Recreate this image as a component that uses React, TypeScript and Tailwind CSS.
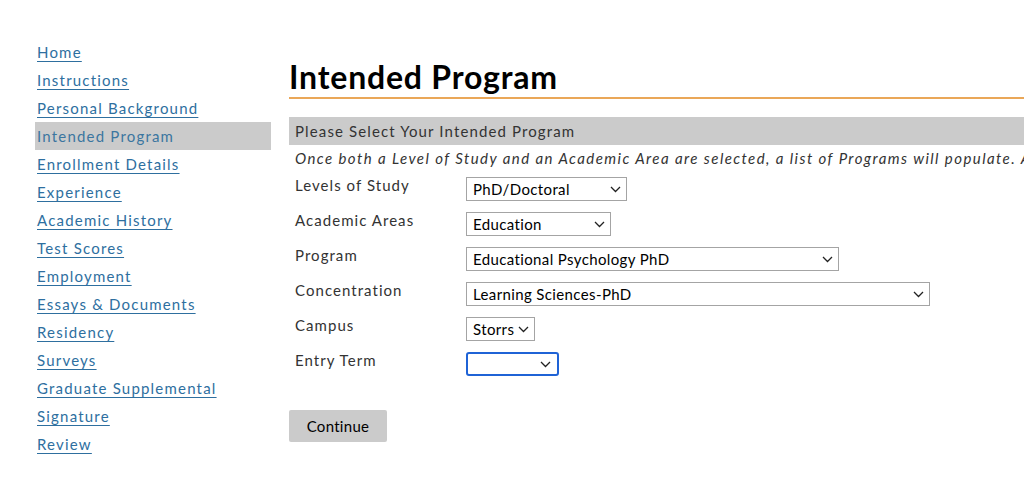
import React from "react";

const links = [
  "Home",
  "Instructions",
  "Personal Background",
  "Intended Program",
  "Enrollment Details",
  "Experience",
  "Academic History",
  "Test Scores",
  "Employment",
  "Essays & Documents",
  "Residency",
  "Surveys",
  "Graduate Supplemental",
  "Signature",
  "Review",
];

function Chevron() {
  return (
    <svg width="11" height="7" viewBox="0 0 11 7" fill="none" className="shrink-0">
      <path d="M1 1l4.5 4.5L10 1" stroke="#222" strokeWidth="1.3" />
    </svg>
  );
}

function Select({ value, width, focused }: { value: string; width: string; focused?: boolean }) {
  return (
    <div
      className={
        focused
          ? `${width} h-[24px] flex items-center justify-between gap-[4px] pl-[6px] pr-[6px] border-2 border-[#1f63d6] rounded-[3px] bg-white`
          : `${width} h-[24px] flex items-center justify-between gap-[4px] pl-[6px] pr-[5px] border border-[#a4a4a4] bg-white`
      }
    >
      <span className="text-[15px] text-black leading-none tracking-[0.025em]">{value}</span>
      <Chevron />
    </div>
  );
}

const rows: { label: string; value: string; width: string; focused?: boolean }[] = [
  { label: "Levels of Study", value: "PhD/Doctoral", width: "w-[161px]" },
  { label: "Academic Areas", value: "Education", width: "w-[145px]" },
  { label: "Program", value: "Educational Psychology PhD", width: "w-[373px]" },
  { label: "Concentration", value: "Learning Sciences-PhD", width: "w-[464px]" },
  { label: "Campus", value: "Storrs", width: "w-[69px]" },
  { label: "Entry Term", value: "", width: "w-[93px]", focused: true },
];

export default function App() {
  return (
    <div
      className="w-[1024px] h-[491px] overflow-hidden bg-white flex"
      style={{ fontFamily: "Lato, 'Open Sans', sans-serif" }}
    >
      <nav className="w-[289px] shrink-0 pl-[35px] pt-[37.5px] pr-[18px]">
        {links.map((l) => (
          <div
            key={l}
            className={
              l === "Intended Program"
                ? "h-[28px] leading-[28px] px-[2px] bg-[#cbcbcb] text-[#3b76a0] text-[15px] tracking-[0.08em]"
                : "h-[28px] leading-[28px] px-[2px] text-[15px] tracking-[0.08em]"
            }
          >
            {l === "Intended Program" ? (
              <span>{l}</span>
            ) : (
              <a href="#" className="text-[#2e6f9f] underline underline-offset-[3px] decoration-[1px]">
                {l}
              </a>
            )}
          </div>
        ))}
      </nav>
      <main className="flex-1 min-w-0 pt-[59px] overflow-hidden">
        <h1 className="text-[32px] leading-[36px] font-bold text-black tracking-[0.025em] pb-[2px] border-b-2 border-[#eaa758]">
          Intended Program
        </h1>
        <div className="mt-[18px] h-[28px] bg-[#cbcbcb] px-[6px] flex items-center text-[15px] text-[#333] tracking-[0.075em]">
          Please Select Your Intended Program
        </div>
        <div className="h-[26px] px-[6px] flex items-center whitespace-nowrap italic text-[15px] text-[#333] tracking-[0.095em]">
          Once both a Level of Study and an Academic Area are selected, a list of Programs will populate. Any changes made will reset the fields below.
        </div>
        <div className="mt-[6px] flex flex-col gap-[11px]">
          {rows.map((r) => (
            <div key={r.label} className="flex h-[24px]">
              <div className="w-[177px] pl-[6px] text-[15px] text-[#333] tracking-[0.07em] leading-[18px] -mt-[1px]">
                {r.label}
              </div>
              <Select value={r.value} width={r.width} focused={r.focused} />
            </div>
          ))}
        </div>
        <button className="mt-[34px] w-[98px] h-[32px] bg-[#cbcbcb] rounded-[2px] text-[15px] text-black tracking-[0.02em]">
          Continue
        </button>
      </main>
    </div>
  );
}
